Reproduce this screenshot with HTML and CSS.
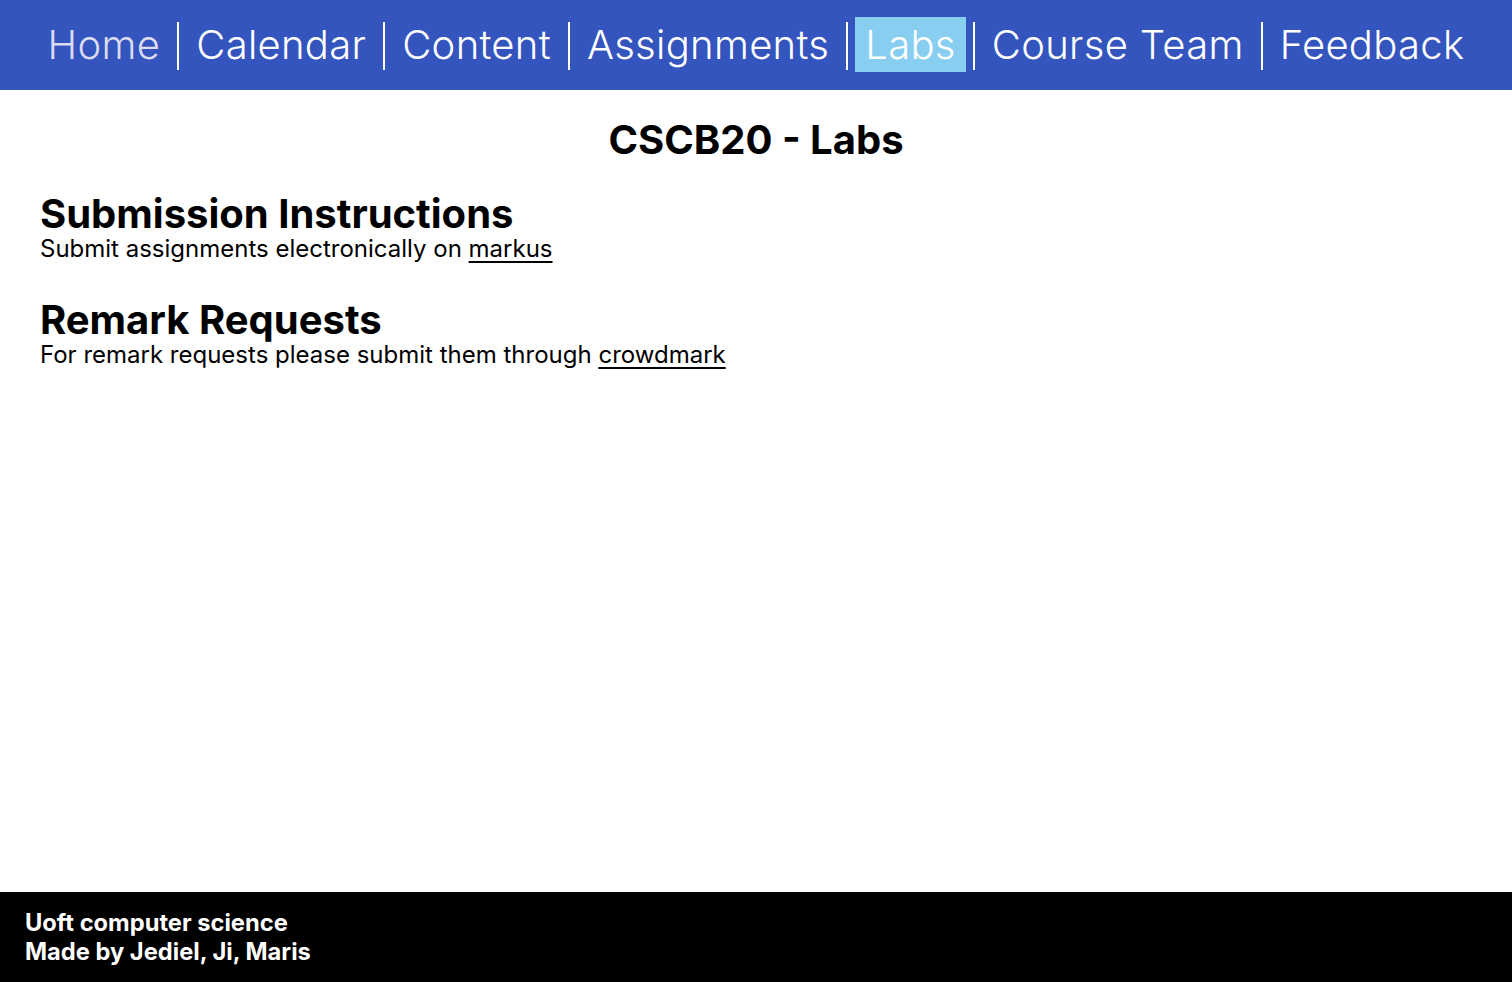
FILE: index.html
```html
<!DOCTYPE html>
<html lang="en">
<head>
<meta charset="utf-8">
<title>CSCB20 - Labs</title>
<link rel="stylesheet" href="styles.css">
</head>
<body>
<nav class="topnav">
  <a class="nav-link nav-home" href="#">Home</a>
  <span class="sep"></span>
  <a class="nav-link" href="#">Calendar</a>
  <span class="sep"></span>
  <a class="nav-link" href="#">Content</a>
  <span class="sep"></span>
  <a class="nav-link" href="#">Assignments</a>
  <span class="sep"></span>
  <a class="nav-link active" href="#">Labs</a>
  <span class="sep"></span>
  <a class="nav-link" href="#">Course Team</a>
  <span class="sep"></span>
  <a class="nav-link" href="#">Feedback</a>
</nav>
<main class="content">
  <h1 class="page-title">CSCB20 - Labs</h1>
  <section class="block">
    <h2 class="block-title">Submission Instructions</h2>
    <p class="block-text">Submit assignments electronically on <a href="#">markus</a></p>
  </section>
  <section class="block">
    <h2 class="block-title">Remark Requests</h2>
    <p class="block-text">For remark requests please submit them through <a href="#">crowdmark</a></p>
  </section>
</main>
<footer class="footer">
  <p>Uoft computer science</p>
  <p>Made by Jediel, Ji, Maris</p>
</footer>
</body>
</html>
```

FILE: styles.css
```css
* { box-sizing: border-box; }
html, body { height: 100%; }
body {
  margin: 0;
  font-family: Inter, "Noto Sans", sans-serif;
  color: #000;
  background: #fff;
  display: flex;
  flex-direction: column;
}
.topnav {
  height: 90px;
  background: #3454be;
  display: flex;
  align-items: center;
  justify-content: center;
  gap: 7px;
}
.nav-link {
  color: #fff;
  text-decoration: none;
  font-size: 40px;
  font-weight: 300;
  letter-spacing: 0.3px;
  line-height: 55px;
  padding: 0 10px;
  margin-top: -1px;
}
.nav-home { color: #dcdcf0; }
.nav-link.active { background: #87cef0; }
.sep {
  width: 2px;
  height: 48px;
  background: #fff;
  margin-top: 2px;
}
.content {
  flex: 1;
  padding: 0 40px;
}
.page-title {
  text-align: center;
  font-size: 40px;
  font-weight: 700;
  margin: 26px 0 29px;
  line-height: 48px;
}
.block { margin-bottom: 36px; }
.block-title {
  font-size: 40px;
  font-weight: 700;
  margin: 0;
  line-height: 42px;
}
.block-text {
  font-size: 24px;
  margin: 0;
  line-height: 28px;
}
.block-text a {
  color: #000;
  text-underline-offset: 4px;
}
.footer {
  height: 90px;
  background: #000;
  color: #fff;
  font-weight: 700;
  font-size: 23.7px;
  padding: 16px 25px;
}
.footer p { margin: 0; line-height: 29px; }
```
